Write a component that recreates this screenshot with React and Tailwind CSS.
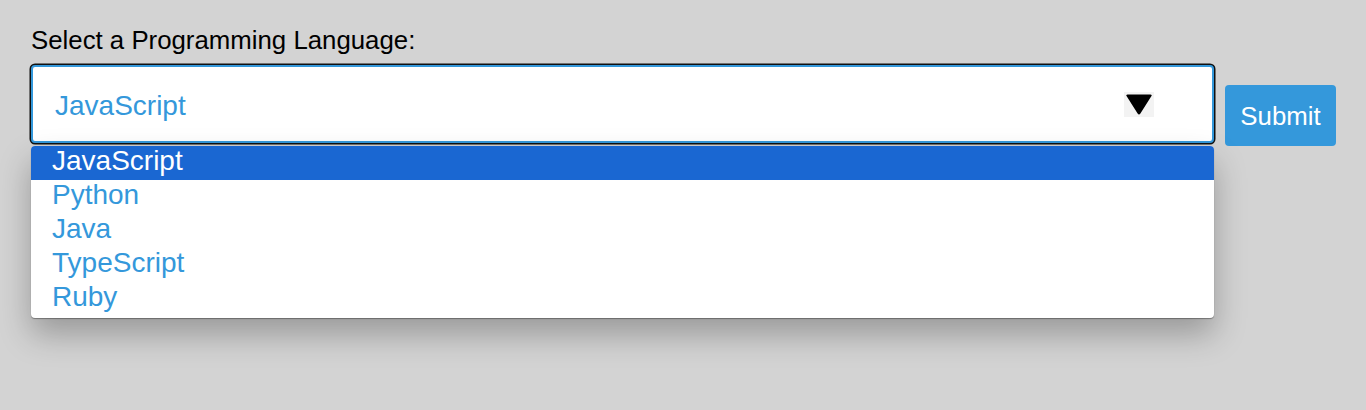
import React from 'react';

const languages = ['JavaScript', 'Python', 'Java', 'TypeScript', 'Ruby'];

const Arrow = () => (
  <svg width="30" height="25" viewBox="0 0 30 25">
    <rect width="30" height="25" fill="#f3f3f3" />
    <path
      d="M3.5 2.5 H26.5 Q28.5 2.5 27.3 4.3 L16.4 21.6 Q15 23.6 13.6 21.6 L2.7 4.3 Q1.5 2.5 3.5 2.5 Z"
      fill="#000"
    />
  </svg>
);

const App = () => {
  const selected = 'JavaScript';

  return (
    <div className="h-[410px] bg-[#d3d3d3] pt-[26px] pl-[31px] font-['Liberation_Sans',Arial,sans-serif]">
      <label className="block text-[25.8px] leading-[29.4px] text-black">Select a Programming Language:</label>

      <div className="flex items-start">
        <div className="relative mt-[10px] w-[1183px] h-[78px]">
          <div className="flex h-full items-center justify-between rounded-[4px] border-2 border-[#3498db] bg-white pl-[22px] pr-[58px] shadow-[0_0_0_1.5px_#101010]">
            <span className="pt-[3px] text-[28px] leading-[32px] text-[#3498db]">{selected}</span>
            <Arrow />
          </div>

          <ul className="absolute left-0 top-[81px] z-10 w-full h-[172px] overflow-hidden rounded-[4px] bg-white shadow-[0_1px_1px_rgba(0,0,0,0.35),0_16px_32px_rgba(0,0,0,0.28)]">
            {languages.map((lang) => (
              <li
                key={lang}
                className={
                  lang === selected
                    ? 'h-[34px] pl-[21px] text-[28px] leading-[30px] bg-[#1a67d2] text-white'
                    : 'h-[34px] pl-[21px] text-[28px] leading-[30px] text-[#3498db]'
                }
              >
                {lang}
              </li>
            ))}
          </ul>
        </div>

        <button
          type="button"
          className="ml-[11px] mt-[30px] flex h-[61px] w-[111px] items-center justify-center rounded-[4px] bg-[#3498db] text-[25.8px] leading-[30px] text-white"
        >
          Submit
        </button>
      </div>
    </div>
  );
};

export default App;
